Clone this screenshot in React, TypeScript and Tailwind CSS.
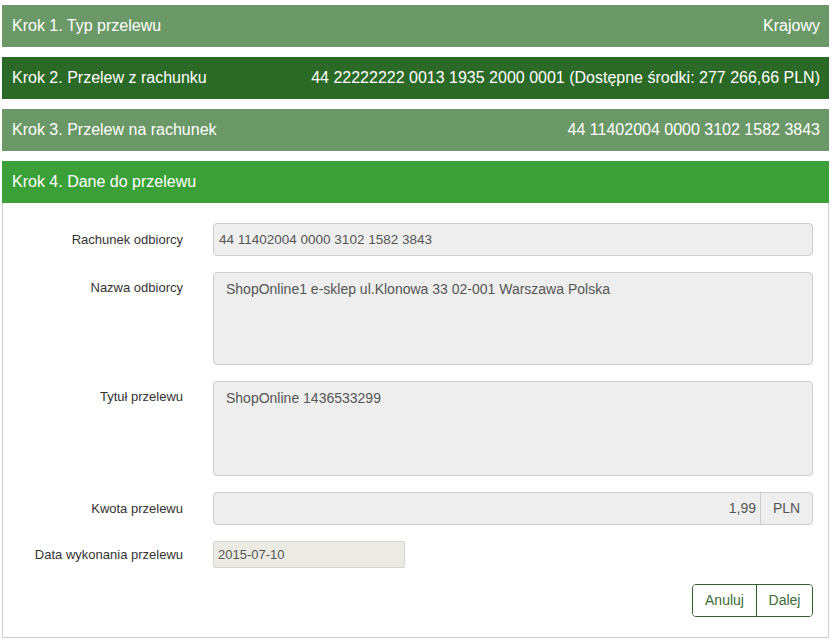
import React from "react";

const font = "font-['Liberation_Sans',Arial,sans-serif]";

interface StepProps {
  title: string;
  value?: string;
  color: string;
}

function StepBar({ title, value, color }: StepProps) {
  return (
    <div
      className={`flex h-[42px] items-center justify-between pl-[10px] pr-[9px] text-[16px] text-white ${color}`}
    >
      <span>{title}</span>
      {value && <span>{value}</span>}
    </div>
  );
}

function Label({ text, className }: { text: string; className: string }) {
  return (
    <div className={`w-[180px] shrink-0 text-right text-[13px] text-[#333] ${className}`}>
      {text}
    </div>
  );
}

export default function App() {
  return (
    <div className={`${font} flex flex-col gap-[10px] bg-white pb-[6px] pl-[2px] pr-[4px] pt-[5px]`}>
      <StepBar title="Krok 1. Typ przelewu" value="Krajowy" color="bg-[#6a9967]" />
      <StepBar
        title="Krok 2. Przelew z rachunku"
        value="44 22222222 0013 1935 2000 0001 (Dostępne środki: 277 266,66 PLN)"
        color="bg-[#2b6a26]"
      />
      <StepBar
        title="Krok 3. Przelew na rachunek"
        value="44 11402004 0000 3102 1582 3843"
        color="bg-[#6a9967]"
      />

      <div>
        <StepBar title="Krok 4. Dane do przelewu" color="bg-[#3ca038]" />
        <div className="flex flex-col gap-[16px] border border-t-0 border-[#cfcfcf] pb-[20px] pr-[15px] pt-[20px]">
          <div className="flex gap-[30px]">
            <Label text="Rachunek odbiorcy" className="leading-[33px]" />
            <input
              readOnly
              value="44 11402004 0000 3102 1582 3843"
              className="h-[33px] flex-1 rounded-[4px] border border-[#ccc] bg-[#eeeeee] pl-[5px] text-[13.5px] text-[#555] outline-none"
            />
          </div>

          <div className="flex gap-[30px]">
            <Label text="Nazwa odbiorcy" className="pt-[7px] leading-[18px]" />
            <textarea
              readOnly
              value="ShopOnline1 e-sklep ul.Klonowa 33 02-001 Warszawa Polska"
              className="h-[93px] flex-1 resize-none rounded-[4px] border border-[#ccc] bg-[#eeeeee] px-[12px] pt-[6px] text-[14px] leading-[20px] text-[#555] outline-none"
            />
          </div>

          <div className="flex gap-[30px]">
            <Label text="Tytuł przelewu" className="pt-[7px] leading-[18px]" />
            <textarea
              readOnly
              value="ShopOnline 1436533299"
              className="h-[95px] flex-1 resize-none rounded-[4px] border border-[#ccc] bg-[#eeeeee] px-[12px] pt-[6px] text-[14px] leading-[20px] text-[#555] outline-none"
            />
          </div>

          <div className="flex gap-[30px]">
            <Label text="Kwota przelewu" className="leading-[33px]" />
            <div className="flex h-[33px] flex-1 rounded-[4px] border border-[#ccc] bg-[#eeeeee]">
              <input
                readOnly
                value="1,99"
                className="min-w-0 flex-1 bg-transparent pr-[4px] text-right text-[14px] text-[#555] outline-none"
              />
              <span className="flex w-[52px] items-center justify-center border-l border-[#ccc] text-[14px] text-[#555]">
                PLN
              </span>
            </div>
          </div>

          <div className="flex gap-[30px]">
            <Label text="Data wykonania przelewu" className="leading-[27px]" />
            <input
              readOnly
              value="2015-07-10"
              className="h-[27px] w-[192px] rounded-[2px] border border-[#d4d4d0] bg-[#ebebe4] pl-[4px] text-[13px] text-[#555] outline-none"
            />
          </div>

          <div className="flex justify-end">
            <div className="flex h-[33px] overflow-hidden rounded-[4px] border border-[#2f5f2c] text-[14px] text-[#3a6c35]">
              <button className="w-[64px] border-r border-[#2f5f2c] bg-white">Anuluj</button>
              <button className="w-[55px] bg-white">Dalej</button>
            </div>
          </div>
        </div>
      </div>
    </div>
  );
}
